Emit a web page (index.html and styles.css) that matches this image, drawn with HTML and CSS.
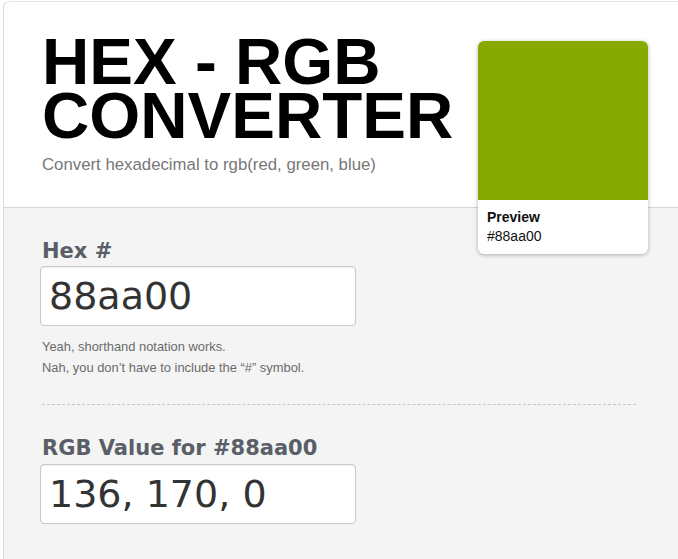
FILE: index.html
```html
<!DOCTYPE html>
<html>
<head>
<meta charset="utf-8">
<link rel="stylesheet" href="styles.css">
</head>
<body>
<div class="page">
  <header class="header">
    <h1 class="title">HEX - RGB<br>CONVERTER</h1>
    <p class="subtitle">Convert hexadecimal to rgb(red, green, blue)</p>
  </header>
  <main class="body">
    <label class="label" for="hex">Hex #</label>
    <input class="field field-first" id="hex" type="text" value="88aa00">
    <div class="help">
      <p>Yeah, shorthand notation works.</p>
      <p>Nah, you don’t have to include the “#” symbol.</p>
    </div>
    <hr class="divider">
    <label class="label" for="rgb">RGB Value for #88aa00</label>
    <input class="field" id="rgb" type="text" value="136, 170, 0">
  </main>
  <aside class="preview">
    <div class="swatch" style="background:#88aa00"></div>
    <div class="caption">
      <div class="caption-title">Preview</div>
      <div class="caption-hex">#88aa00</div>
    </div>
  </aside>
</div>
</body>
</html>
```

FILE: styles.css
```css
html, body {
  margin: 0;
  padding: 0;
  background: #ffffff;
  overflow: hidden;
}

body {
  font-family: "Liberation Sans", Arial, sans-serif;
  width: 678px;
  height: 559px;
}

.page {
  position: relative;
  box-sizing: border-box;
  margin: 1px 0 0 3px;
  border-left: 1px solid #dcdcdc;
  border-top: 1px solid #e6e6e6;
  border-top-left-radius: 6px;
  height: 558px;
  overflow: hidden;
  background: #f4f4f4;
}

.header {
  background: #ffffff;
  border-top-left-radius: 6px;
  padding: 33px 42px 32px 38px;
  border-bottom: 1px solid #d6d6d6;
}

.title {
  margin: 0;
  font-family: "Liberation Sans", Arial, sans-serif;
  font-weight: bold;
  font-size: 65.5px;
  line-height: 54px;
  color: #000;
}

.subtitle {
  margin: 12px 0 0 0;
  font-size: 16.8px;
  line-height: 20px;
  color: #777777;
}

.body {
  padding: 30px 42px 0 38px;
  display: flex;
  flex-direction: column;
  align-items: flex-start;
}

.label {
  font-family: "DejaVu Sans", sans-serif;
  font-weight: bold;
  font-size: 21px;
  line-height: 26px;
  color: #5a5f67;
}

.field {
  box-sizing: border-box;
  width: 316px;
  height: 60px;
  margin: 3px 0 0 -2px;
  padding: 0 0 0 8px;
  border: 1px solid #c8c8c8;
  border-radius: 4px;
  background: #fff;
  font-family: "DejaVu Sans", sans-serif;
  font-size: 38px;
  color: #333333;
  box-shadow: inset 0 1px 2px rgba(0,0,0,0.06);
  outline: none;
}

.field-first {
  margin-top: 2px;
}

.help {
  margin-top: 10px;
  font-size: 12.9px;
  line-height: 21px;
  color: #6a6a6a;
}

.help p {
  margin: 0;
}

.divider {
  align-self: stretch;
  margin: 26px 0 30px 0;
  border: 0;
  border-top: 1px dashed #c4c4c4;
  height: 0;
}

.preview {
  position: absolute;
  top: 39px;
  left: 474px;
  width: 170px;
  background: #fff;
  border-radius: 6px;
  overflow: hidden;
  box-shadow: 0 1px 4px rgba(0,0,0,0.3);
}

.swatch {
  height: 159px;
}

.caption {
  padding: 8px 9px 8px 9px;
  font-size: 14px;
  line-height: 19px;
  color: #111;
}

.caption-title {
  font-weight: bold;
}
```
